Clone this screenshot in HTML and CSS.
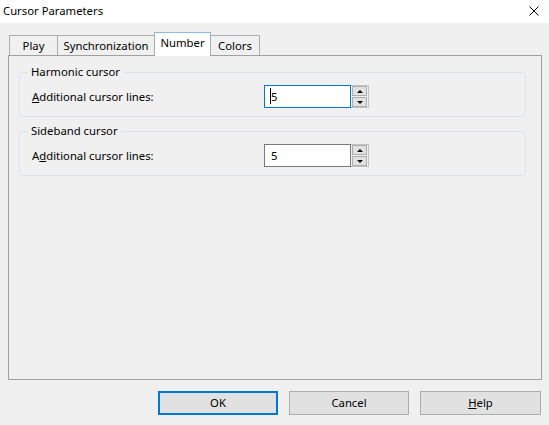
FILE: index.html
```html
<!DOCTYPE html>
<html>
<head>
<meta charset="utf-8">
<link rel="stylesheet" href="styles.css">
</head>
<body>
<div class="window">
  <div class="titlebar">
    <span class="title">Cursor Parameters</span>
    <svg class="close" width="10" height="10" viewBox="0 0 10 10"><path d="M0.5 0.5 L9.5 9.5 M9.5 0.5 L0.5 9.5" stroke="#000" stroke-width="1" fill="none"/></svg>
  </div>
  <div class="content">
    <div class="tabs">
      <div class="tab tab-play">Play</div>
      <div class="tab tab-sync">Synchronization</div>
      <div class="tab tab-number active">Number</div>
      <div class="tab tab-colors last">Colors</div>
    </div>
    <div class="panel">
      <fieldset class="group">
        <legend>Harmonic cursor</legend>
        <div class="row">
          <label class="lbl"><u>A</u>dditional cursor lines:</label>
          <div class="spin">
            <div class="field focused"><span class="caret"></span>5</div>
            <div class="spin-btns">
              <div class="sbtn"><span class="tri up"></span></div>
              <div class="sbtn"><span class="tri down"></span></div>
            </div>
          </div>
        </div>
      </fieldset>
      <fieldset class="group">
        <legend>Sideband cursor</legend>
        <div class="row">
          <label class="lbl">A<u>d</u>ditional cursor lines:</label>
          <div class="spin">
            <div class="field">5</div>
            <div class="spin-btns">
              <div class="sbtn"><span class="tri up"></span></div>
              <div class="sbtn"><span class="tri down"></span></div>
            </div>
          </div>
        </div>
      </fieldset>
    </div>
    <div class="buttons">
      <div class="btn default">OK</div>
      <div class="btn">Cancel</div>
      <div class="btn btn-help"><u>H</u>elp</div>
    </div>
  </div>
</div>
</body>
</html>
```

FILE: styles.css
```css
html, body {
  margin: 0;
  padding: 0;
  width: 549px;
  height: 425px;
  overflow: hidden;
  background: #f0f0f0;
  font-family: "Noto Sans", "Open Sans", sans-serif;
  font-size: 11.3px;
  color: #000;
}
.window {
  width: 549px;
  height: 425px;
  display: flex;
  flex-direction: column;
}
.titlebar {
  height: 23px;
  background: #fff;
  display: flex;
  align-items: center;
  justify-content: space-between;
  padding: 0 10px 0 3px;
}
.title {
  line-height: 16px;
  margin-top: -2px;
}
.close {
  display: block;
  margin-top: -2px;
}
.content {
  flex: 1;
  display: flex;
  flex-direction: column;
  padding: 9px 7px 0 8px;
}
.tabs {
  display: flex;
  align-items: flex-end;
  height: 23px;
  padding-left: 1px;
  position: relative;
  z-index: 1;
}
.tab {
  height: 20px;
  box-sizing: border-box;
  border: 1px solid #adadad;
  border-right: none;
  border-bottom: none;
  background: #f0f0f0;
  display: flex;
  align-items: center;
  justify-content: center;
  line-height: 16px;
  padding-top: 1px;
}
.tab.last { border-right: 1px solid #adadad; }
.tab-play { width: 48px; }
.tab-sync { width: 97px; }
.tab-colors { width: 49px; }
.tab.active {
  width: 57px;
  height: 24px;
  margin-bottom: -1px;
  background: #fff;
  border: 1px solid #adadad;
  border-top-color: #8fbbe3;
  border-bottom: none;
  padding-top: 0;
  padding-bottom: 3px;
}
.tab.active + .tab { border-left: none; }
.panel {
  height: 325px;
  box-sizing: border-box;
  border: 1px solid #a0a0a0;
  padding: 8px 15px 0 10px;
  display: flex;
  flex-direction: column;
  gap: 6px;
}
.group {
  margin: 0;
  padding: 5px 0 8px 12px;
  border: 1px solid #dce3ea;
  border-radius: 3px;
  min-width: 0;
}
.group legend {
  padding: 0 3px;
  margin-left: -4px;
  line-height: 16px;
}
.row {
  display: grid;
  grid-template-columns: 232px auto;
  align-items: center;
}
.lbl { line-height: 16px; }
.spin {
  display: flex;
  height: 23px;
}
.field {
  width: 87px;
  height: 23px;
  box-sizing: border-box;
  border: 1px solid #7a7a7a;
  background: #fff;
  padding-left: 6px;
  line-height: 20px;
  display: flex;
  align-items: center;
  position: relative;
}
.field.focused { border-color: #0078d7; }
.caret {
  position: absolute;
  left: 5px;
  top: 2px;
  width: 1px;
  height: 16px;
  background: #000;
}
.spin-btns {
  width: 18px;
  height: 23px;
  box-sizing: border-box;
  border: 1px solid #c3c3c3;
  border-left: none;
  display: flex;
  flex-direction: column;
  gap: 1px;
  padding: 0 1px;
  justify-content: center;
}
.sbtn {
  flex: 1;
  background: #e1e1e1;
  border: 1px solid #adadad;
  display: flex;
  align-items: center;
  justify-content: center;
}
.tri {
  width: 0;
  height: 0;
  border-left: 3px solid transparent;
  border-right: 3px solid transparent;
}
.tri.up { border-bottom: 3px solid #000; }
.tri.down { border-top: 3px solid #000; }
.buttons {
  display: flex;
  justify-content: flex-end;
  gap: 11px;
  padding-top: 11px;
  padding-right: 1px;
}
.btn {
  width: 120px;
  height: 24px;
  box-sizing: border-box;
  border: 1px solid #adadad;
  background: #e1e1e1;
  display: flex;
  align-items: center;
  justify-content: center;
  line-height: 16px;
}
.btn-help { width: 121px; }
.btn.default { border: 2px solid #0078d7; }
```
